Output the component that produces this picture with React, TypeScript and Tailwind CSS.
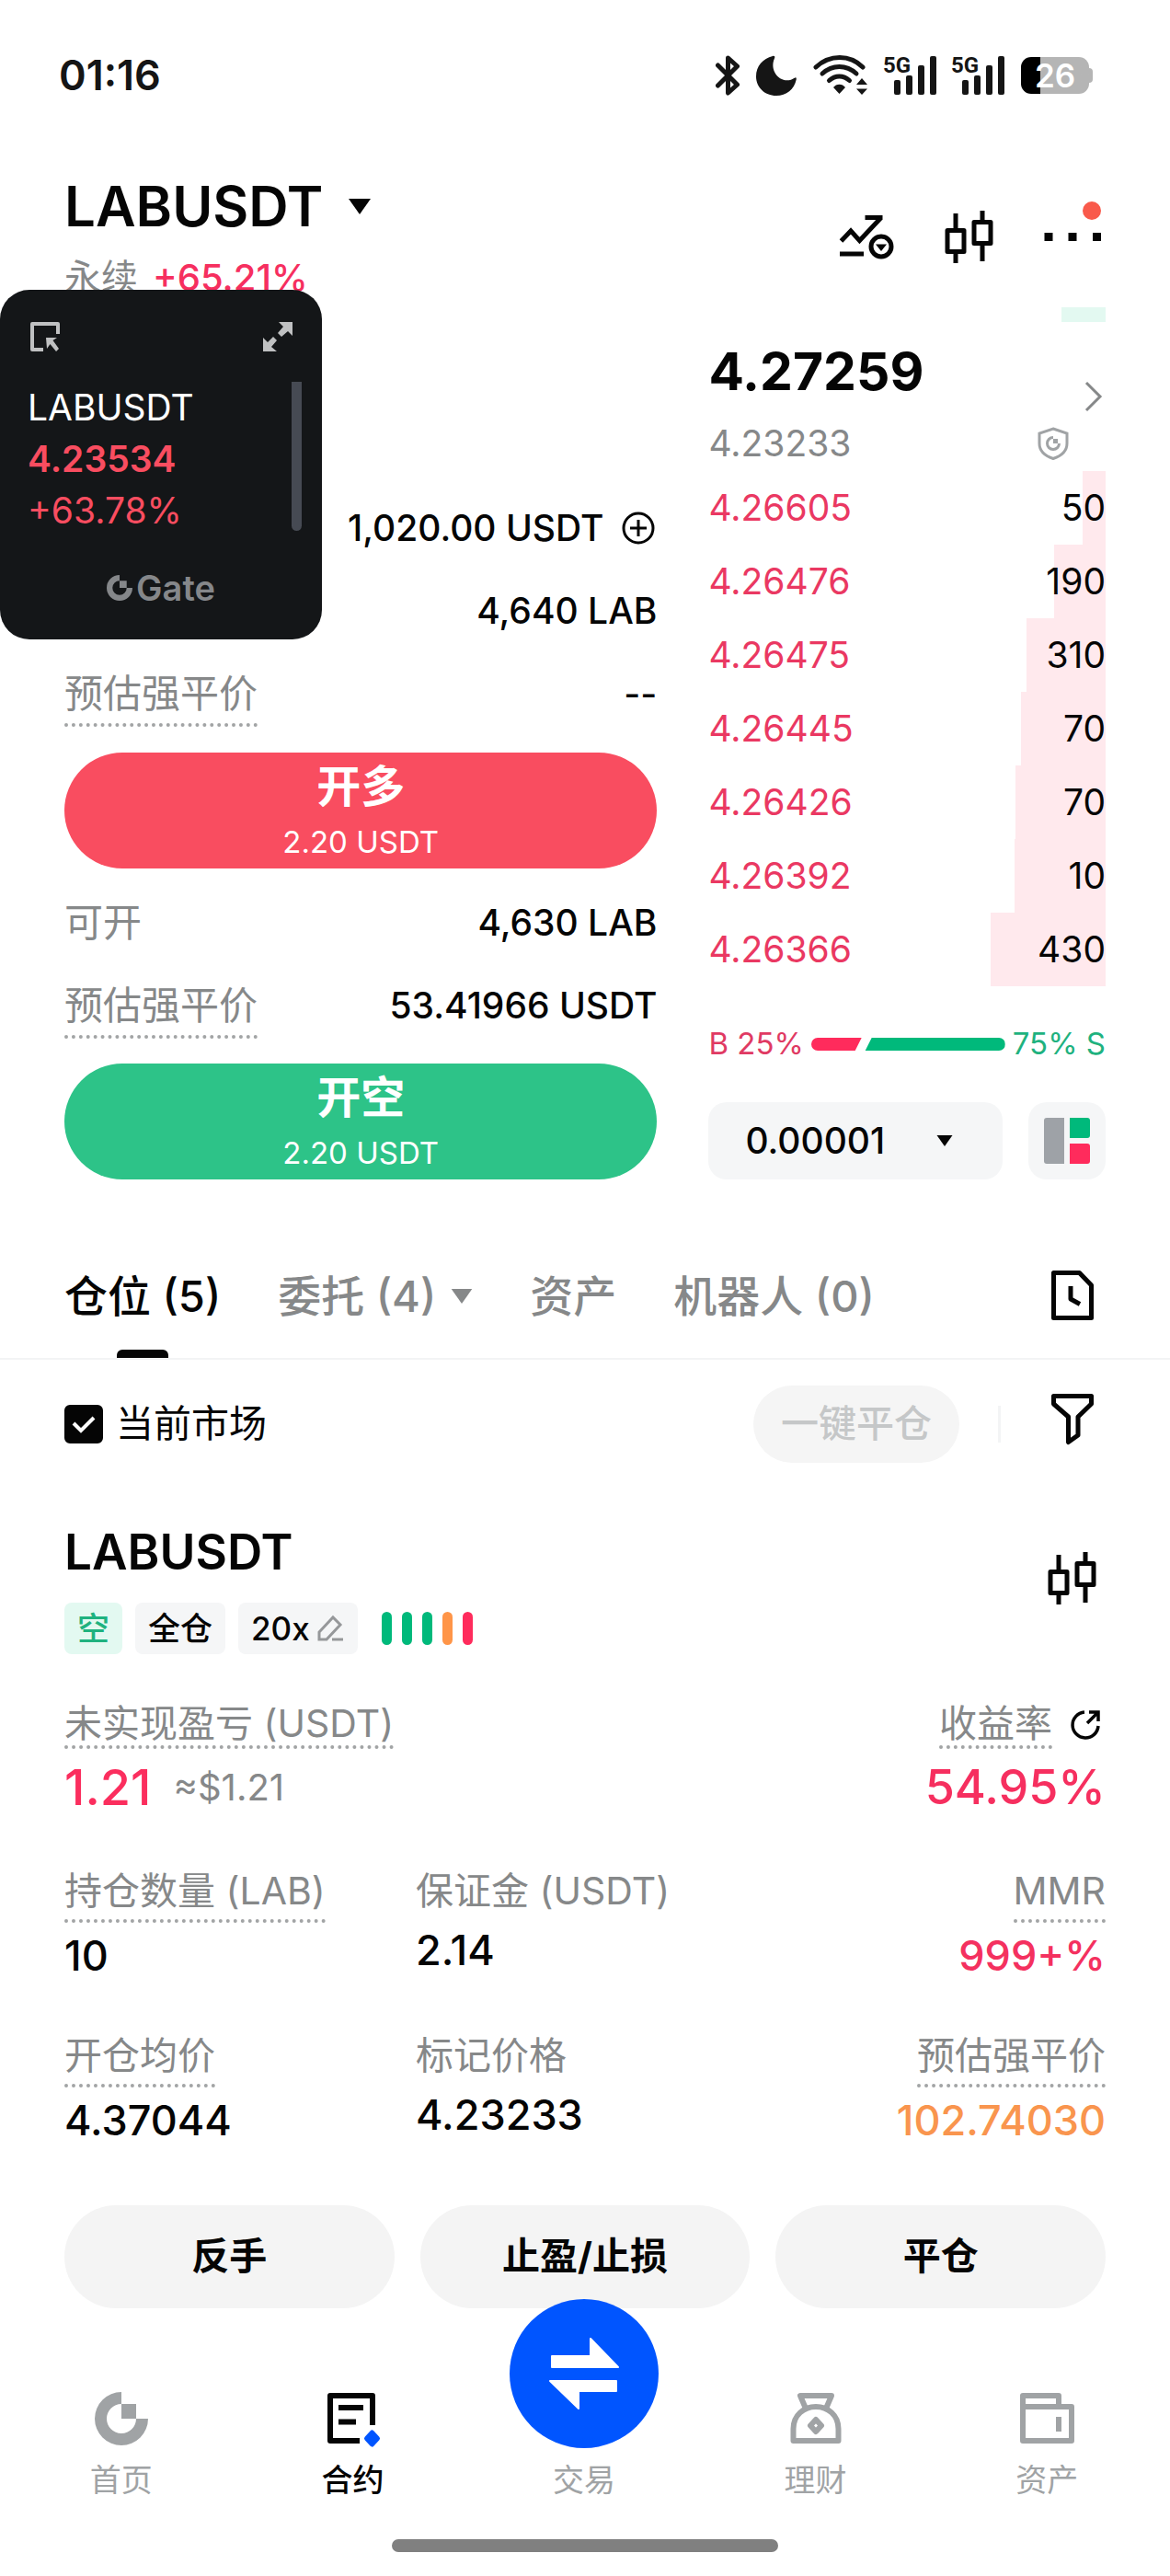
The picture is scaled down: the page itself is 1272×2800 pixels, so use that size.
import { useState } from "react";
import type { ReactNode } from "react";

type Ask = {
  price: string;
  amount: string;
  depth: number;
};

type StatProps = {
  label: string;
  value: string;
  dotted?: boolean;
  right?: boolean;
  color?: string;
};

const asks: Ask[] = [
  { price: "4.26605", amount: "50", depth: 6 },
  { price: "4.26476", amount: "190", depth: 13 },
  { price: "4.26475", amount: "310", depth: 20 },
  { price: "4.26445", amount: "70", depth: 21.5 },
  { price: "4.26426", amount: "70", depth: 22.7 },
  { price: "4.26392", amount: "10", depth: 23 },
  { price: "4.26366", amount: "430", depth: 29 },
];

const tabs = [
  { id: "positions", label: "仓位 (5)" },
  { id: "orders", label: "委托 (4)", caret: true },
  { id: "assets", label: "资产" },
  { id: "bots", label: "机器人 (0)" },
];

const riskBars = ["bg-[#00b97b]", "bg-[#00b97b]", "bg-[#00b97b]", "bg-[#ff9548]", "bg-[#ff2b5c]"];

const Caret = ({ className = "" }: { className?: string }) => (
  <svg viewBox="0 0 24 17" className={className} fill="currentColor" aria-hidden="true">
    <path d="M0 0H24L12 17Z" />
  </svg>
);

const Signal = () => (
  <svg width="56" height="44" viewBox="0 0 56 44" fill="#151515" className="overflow-visible" aria-hidden="true">
    <text x="-2" y="19" fontSize="24" fontWeight="700" fontFamily="Roboto, sans-serif">
      5G
    </text>
    <rect x="10" y="27" width="7" height="16" rx="2" />
    <rect x="23" y="22" width="7" height="21" rx="2" />
    <rect x="36" y="11" width="7" height="32" rx="2" />
    <rect x="49" y="1" width="7" height="42" rx="2" />
  </svg>
);

const StatusBar = () => (
  <div className="flex h-[164px] items-center justify-between pr-[84px] pl-[64px]">
    <span className="text-[45px] font-semibold text-[#151515]">01:16</span>
    <div className="flex items-center gap-[18px]">
      <svg width="26" height="44" viewBox="0 0 26 44" fill="none" stroke="#151515" strokeWidth="5" strokeLinejoin="round" strokeLinecap="round" aria-hidden="true">
        <path d="M2.500 11L23.500 32L13.500 41V3L23.500 12L2.500 33" />
      </svg>
      <svg width="44" height="44" viewBox="0 0 44 44" fill="#151515" aria-hidden="true">
        <path d="M18 1C20 .5 21 1.500 20 3.500C14.500 15.500 24 29.500 37 27C39 26.500 41 25 42.500 24.500C43.500 24 44 25 43.700 26.500C41.500 37 33 44 22 44C9 44 0 34.500 0 23C0 12 7.500 3.500 18 1Z" />
      </svg>
      <svg width="60" height="44" viewBox="0 0 60 44" fill="none" stroke="#151515" strokeWidth="5" strokeLinecap="round" aria-hidden="true">
        <path d="M3 13C18 -1 40 -1 54 13" />
        <path d="M10 20C21 10 36 10 47 20" />
        <path d="M17.500 27.500C24 21.500 33 21.500 39.500 27.500" />
        <path d="M22 35C25 30.500 32 30.500 35 35L28.500 42Z" fill="#151515" stroke="none" />
        <path d="M47 32L53 25L59 32ZM47 36.500H59L53 43Z" fill="#151515" stroke="none" />
      </svg>
      <Signal />
      <Signal />
      <div className="flex items-center">
        <div className="flex h-10 w-[74px] items-center justify-center rounded-[11px] bg-linear-to-r from-black from-29% to-[#b5b5b5] to-29% text-[35px] font-semibold text-white">
          26
        </div>
        <div className="h-4 w-1 rounded-r-sm bg-[#b5b5b5]" />
      </div>
    </div>
  </div>
);

const Candles = () => (
  <svg width="72" height="72" viewBox="0 0 72 72" fill="none" stroke="#050505" strokeWidth="5" strokeLinejoin="round" aria-hidden="true">
    <path d="M12 29.500H30V52.500H12ZM21 11V29M21 53V65" />
    <path d="M41 20.500H59V43.500H41ZM50 8V20M50 44V63" />
  </svg>
);

const Header = () => (
  <header className="flex items-center justify-between px-[70px] pt-5">
    <div>
      <h1>
        <button className="flex h-20 items-center gap-7 text-[60px] font-semibold">
          LABUSDT
          <Caret className="h-[17px] w-6" />
        </button>
      </h1>
      <p className="mt-[10px] flex h-14 items-center gap-4 text-[40px]">
        <span className="text-[#868889]">永续</span>
        <span className="font-medium text-[#f62f5f]">+65.21%</span>
      </p>
    </div>
    <div className="flex gap-10">
      <button aria-label="行情">
        <svg width="72" height="72" viewBox="0 0 72 72" fill="none" stroke="#050505" strokeWidth="5" aria-hidden="true">
          <path d="M8.500 41L19 30L28.500 40.500L51.500 16M34.500 15.500H53.500M7 55H33" />
          <circle cx="52" cy="47" r="11" />
          <path d="M46 44.500H58L52 52Z" fill="#050505" stroke="none" />
        </svg>
      </button>
      <button aria-label="K线">
        <Candles />
      </button>
      <button aria-label="更多">
        <svg width="72" height="72" viewBox="0 0 72 72" fill="#050505" className="overflow-visible" aria-hidden="true">
          <path d="M5.500 32H14.500V41H5.500ZM31.500 32H40.500V41H31.500ZM58 32H67V41H58Z" />
          <circle cx="57" cy="8" r="10" fill="#f95a4b" />
        </svg>
      </button>
    </div>
  </header>
);

const Row = ({ label, dotted, children }: { label?: string; dotted?: boolean; children: ReactNode }) => (
  <div className="flex h-[90px] items-center justify-between">
    <span
      className={
        dotted
          ? "mt-3 border-b-4 border-dotted border-[#a2a4a5] pb-2 text-[42px] leading-[48px] text-[#868889]"
          : "text-[42px] leading-[48px] text-[#868889]"
      }
    >
      {label}
    </span>
    <span className="flex items-center gap-[18px] text-[39px] font-medium">{children}</span>
  </div>
);

const OrderForm = () => (
  <section className="min-w-0 flex-[645] pt-[199px]">
    <Row>
      1,020.00 USDT
      <button aria-label="充值">
        <svg width="40" height="40" viewBox="0 0 40 40" fill="none" stroke="#050505" strokeWidth="3" aria-hidden="true">
          <circle cx="20" cy="20" r="16" />
          <path d="M20 11V29M11 20H29" />
        </svg>
      </button>
    </Row>
    <Row>4,640 LAB</Row>
    <Row label="预估强平价" dotted>
      --
    </Row>
    <button className="mt-[19px] flex h-[126px] w-full flex-col items-center justify-center rounded-full bg-[#f94d60] pt-1 text-white">
      <span className="text-[48px] leading-[64px] font-bold">开多</span>
      <span className="text-[33px] leading-[56px]">2.20 USDT</span>
    </button>
    <div className="mt-[14px]">
      <Row label="可开">4,630 LAB</Row>
      <Row label="预估强平价" dotted>
        53.41966 USDT
      </Row>
    </div>
    <button className="mt-[18px] flex h-[126px] w-full flex-col items-center justify-center rounded-full bg-[#2dc388] pt-1 text-white">
      <span className="text-[48px] leading-[64px] font-bold">开空</span>
      <span className="text-[33px] leading-[56px]">2.20 USDT</span>
    </button>
  </section>
);

const OrderBook = () => (
  <section className="min-w-0 flex-[432] pt-1">
    <div className="ml-auto h-4 w-12 bg-[#e3f9f1]" />
    <div className="mt-[18px] flex h-[84px] justify-between">
      <span className="text-[57px] leading-[72px] font-bold">4.27259</span>
      <button className="self-end" aria-label="详情">
        <svg width="24" height="42" viewBox="0 0 24 42" fill="none" stroke="#868889" strokeWidth="3" aria-hidden="true">
          <path d="M3 6L18 21L3 36" />
        </svg>
      </button>
    </div>
    <div className="flex h-[60px] items-center justify-between pr-10">
      <span className="text-[39px] text-[#868889]">4.23233</span>
      <svg width="34" height="36" viewBox="0 0 34 36" fill="none" stroke="#a0a3a5" strokeWidth="3" aria-hidden="true">
        <path d="M17 2L32 7V18C32 26 26 31.500 17 34.500C8 31.500 2 26 2 18V7Z" />
        <path d="M17 11.500A6.500 6.500 0 1 0 23.500 18" />
        <path d="M17 13H22V18H17Z" fill="#a0a3a5" stroke="none" />
      </svg>
    </div>
    <table className="w-full text-[39px]">
      <tbody>
        {asks.map((ask) => (
          <tr
            key={ask.price}
            className="h-20"
            style={{
              background: `linear-gradient(to left, #ffe9ed ${ask.depth}%, transparent ${ask.depth}%)`,
            }}
          >
            <td className="p-0 text-[#ea3862]">{ask.price}</td>
            <td className="p-0 text-right">{ask.amount}</td>
          </tr>
        ))}
      </tbody>
    </table>
    {/* 买卖比例 */}
    <div className="flex h-[126px] items-center gap-2 text-[33px] whitespace-nowrap">
      <span className="text-[#e03a63]">B 25%</span>
      <div className="flex h-[14px] flex-1">
        <div className="w-[26%] rounded-l-full bg-[#ff2b5c] [clip-path:polygon(0_0,100%_0,calc(100%_-_7px)_100%,0_100%)]" />
        <div className="flex-1 rounded-r-full bg-[#00b97b] [clip-path:polygon(11px_0,100%_0,100%_100%,4px_100%)]" />
      </div>
      <span className="text-[#1fb27f]">75% S</span>
    </div>
    <div className="flex h-[84px] gap-7">
      <div className="relative flex-1">
        <select
          aria-label="价格精度"
          className="h-full w-full appearance-none rounded-[20px] bg-[#f5f6f7] pl-10 text-[39px] font-medium"
        >
          <option>0.00001</option>
        </select>
        <Caret className="pointer-events-none absolute top-9 right-[54px] h-3 w-[18px]" />
      </div>
      <button className="flex w-[84px] items-center justify-center rounded-[20px] bg-[#f5f6f7]" aria-label="盘口样式">
        <svg width="50" height="50" viewBox="0 0 50 50" aria-hidden="true">
          <path d="M3 0H22V50H3Q0 50 0 47V3Q0 0 3 0Z" fill="#9ea2a7" />
          <path d="M28 0H47Q50 0 50 3V19Q50 22 47 22H28Z" fill="#00b97b" />
          <path d="M28 28H47Q50 28 50 31V47Q50 50 47 50H28Z" fill="#ff2b5c" />
        </svg>
      </button>
    </div>
  </section>
);

// 悬浮行情窗
const FloatingTicker = () => (
  <aside className="absolute top-[315px] left-0 flex h-[380px] w-[350px] flex-col rounded-[32px] bg-[#141618] px-[30px] pt-[30px]">
    <div className="flex justify-between">
      <button aria-label="收起">
        <svg width="38" height="38" viewBox="0 0 38 38" fill="none" stroke="#c0c1c2" strokeWidth="4" aria-hidden="true">
          <path d="M33 18V7H5V35H17" strokeLinejoin="round" />
          <path d="M20 22H32L27.500 25L34 34L31 37L24.500 29L21 34Z" fill="#c0c1c2" stroke="none" />
        </svg>
      </button>
      <button aria-label="展开">
        <svg width="36" height="38" viewBox="0 0 36 38" fill="#c0c1c2" aria-hidden="true">
          <path d="M19 5H34V20L29 15L22 21L18 17L24 10Z" />
          <path d="M2 22L7 27L13 21L17 25L11 32L17 37H2Z" />
        </svg>
      </button>
    </div>
    <div className="mt-8 flex justify-between text-[39px] leading-[56px] text-[#f94d60]">
      <div>
        <p className="text-white">LABUSDT</p>
        <p className="font-semibold">4.23534</p>
        <p>+63.78%</p>
      </div>
      <div className="-mr-2 h-[162px] w-[11px] rounded-b-full bg-[#464a53]" />
    </div>
    <div className="mt-8 flex items-center justify-center gap-1 text-[38px] leading-[48px] font-semibold text-[#85878a]">
      <svg width="28" height="28" viewBox="7 7 58 58" fill="currentColor" aria-hidden="true">
        <path d="M36 7A29 29 0 1 0 65 36H52A16 16 0 1 1 36 20ZM36 20H52V36H36Z" />
      </svg>
      Gate
    </div>
  </aside>
);

const Stat = ({ label, value, dotted, right, color = "text-[#050505]" }: StatProps) => (
  <div className={right ? "text-right" : ""}>
    <dt
      className={
        dotted
          ? "inline-block border-b-4 border-dotted border-[#a2a4a5] pb-[7px] align-top text-[41px] leading-[48px] text-[#868889]"
          : "inline-block pb-[5px] align-top text-[41px] leading-[48px] text-[#868889]"
      }
    >
      {label}
    </dt>
    <dd className={`mt-2 text-[45px] leading-[56px] font-medium ${color}`}>{value}</dd>
  </div>
);

const Position = () => (
  <article className="px-[70px] pt-[33px]">
    <div className="flex items-start justify-between">
      <div>
        <h2 className="text-[53px] leading-[72px] font-semibold">LABUSDT</h2>
        <div className="mt-[19px] flex h-14 items-center gap-[14px] text-[35px] font-medium">
          <span className="flex h-full items-center rounded-lg bg-[#e3f9f1] px-[14px] text-[#1fb27f]">空</span>
          <span className="flex h-full items-center rounded-lg bg-[#f5f6f7] px-[14px]">全仓</span>
          <button className="flex h-full items-center gap-2 rounded-lg bg-[#f5f6f7] px-[14px]">
            20x
            <svg width="30" height="30" viewBox="0 0 30 30" fill="none" stroke="#96989a" strokeWidth="3" aria-hidden="true">
              <path d="M2 27V19L17 3L25 11L10 27ZM16 27H28" />
            </svg>
          </button>
          <div className="flex gap-[11px] pl-3">
            {riskBars.map((bar, i) => (
              <span key={i} className={`h-9 w-[11px] rounded-full ${bar}`} />
            ))}
          </div>
        </div>
      </div>
      <button className="mt-7" aria-label="K线">
        <Candles />
      </button>
    </div>

    <div className="mt-[51px] flex justify-between">
      <div>
        <span className="inline-block border-b-4 border-dotted border-[#a2a4a5] align-top text-[41px] leading-[48px] text-[#868889]">
          未实现盈亏 (USDT)
        </span>
        <p className="mt-[10px] flex items-center gap-6 text-[54px] leading-[64px] font-medium text-[#fb2e5e]">
          1.21
          <span className="text-[40px] font-normal text-[#868889]">≈$1.21</span>
        </p>
      </div>
      <div className="text-right">
        <div className="flex justify-end gap-[18px]">
          <span className="border-b-4 border-dotted border-[#a2a4a5] text-[41px] leading-[48px] text-[#868889]">
            收益率
          </span>
          <button aria-label="分享">
            <svg width="40" height="40" viewBox="0 0 40 40" fill="none" stroke="#050505" strokeWidth="3.500" aria-hidden="true">
              <path d="M17 6A14 14 0 1 0 32 21" />
              <path d="M20 18L31 7M22 6H32V16" />
            </svg>
          </button>
        </div>
        <p className="mt-[10px] text-[52px] leading-[64px] font-medium text-[#f62f5f]">54.95%</p>
      </div>
    </div>

    <dl className="mt-14 grid grid-cols-[27fr_27fr_26fr] gap-y-14 whitespace-nowrap">
      <Stat label="持仓数量 (LAB)" value="10" dotted />
      <Stat label="保证金 (USDT)" value="2.14" />
      <Stat label="MMR" value="999+%" dotted right color="text-[#f4315f]" />
      <Stat label="开仓均价" value="4.37044" dotted />
      <Stat label="标记价格" value="4.23233" />
      <Stat label="预估强平价" value="102.74030" dotted right color="text-[#f9954e]" />
    </dl>

    <div className="mt-16 grid grid-cols-3 gap-7 text-[41px] font-bold">
      <button className="h-28 rounded-full bg-[#f4f4f4]">反手</button>
      <button className="h-28 rounded-full bg-[#f4f4f4]">止盈/止损</button>
      <button className="h-28 rounded-full bg-[#f4f4f4]">平仓</button>
    </div>
  </article>
);

const NavItem = ({ label, active, children }: { label: string; active?: boolean; children: ReactNode }) => (
  <a
    href="#"
    className={`flex flex-1 flex-col items-center justify-end gap-[7px] text-[34px] leading-[48px] ${
      active ? "font-medium text-[#050505]" : "text-[#a0a3a5]"
    }`}
  >
    {children}
    {label}
  </a>
);

const BottomNav = () => (
  <nav className="relative mt-[84px] flex pr-2 pl-[6px]">
    <NavItem label="首页">
      <svg width="72" height="72" viewBox="0 0 72 72" fill="currentColor" aria-hidden="true">
        <path d="M36 7A29 29 0 1 0 65 36H52A16 16 0 1 1 36 20ZM36 20H52V36H36Z" />
      </svg>
    </NavItem>
    <NavItem label="合约" active>
      <svg width="72" height="72" viewBox="0 0 72 72" fill="none" stroke="currentColor" strokeWidth="6" strokeLinejoin="round" aria-hidden="true">
        <path d="M58 43V11H12V60H44M21 24H48M21 39.500H40" />
        <path d="M57.500 51L63.500 57.500L57.500 64L51.500 57.500Z" fill="#0055ff" stroke="#0055ff" strokeWidth="5" />
      </svg>
    </NavItem>
    <NavItem label="交易">
      <span className="-mt-[94px] mb-1 rounded-full bg-[#0055ff]">
        <svg width="162" height="162" viewBox="0 0 162 162" fill="#fff" stroke="#fff" strokeWidth="2" strokeLinejoin="round" aria-hidden="true">
          <path d="M46 62H88V43L118 74H46Z" />
          <path d="M116 89V100H75V119L44 89Z" />
        </svg>
      </span>
    </NavItem>
    <NavItem label="理财">
      <svg width="72" height="72" viewBox="0 0 72 72" fill="none" stroke="currentColor" strokeWidth="6" strokeLinejoin="round" aria-hidden="true">
        <path d="M25 25L19 11H53L47 25" />
        <path d="M11.500 60V47C11.500 32 23 23 36 23S60.500 32 60.500 47V60Z" />
        <path d="M36 37L42 43.500L36 50L30 43.500Z" />
      </svg>
    </NavItem>
    <NavItem label="资产">
      <svg width="72" height="72" viewBox="0 0 72 72" fill="none" stroke="currentColor" strokeWidth="6" strokeLinejoin="round" aria-hidden="true">
        <path d="M10 23V11H49V23M10 23H63V60H10Z" />
        <path d="M49 34V50" />
      </svg>
    </NavItem>
  </nav>
);

const App = () => {
  const [activeTab, setActiveTab] = useState("positions");
  const [onlyCurrent, setOnlyCurrent] = useState(true);

  return (
    <div className="relative bg-white font-[Inter,'Noto_Sans_CJK_SC',sans-serif] text-[#050505]">
      <StatusBar />
      <Header />
      <main>
        <div className="flex gap-14 px-[70px]">
          <OrderForm />
          <OrderBook />
        </div>

        {/* 标签栏 */}
        <div className="mt-[60px] flex h-[136px] items-center justify-between border-b-2 border-[#f3f4f5] px-[70px]">
          <div className="flex h-full gap-[62px] text-[47px] font-medium whitespace-nowrap">
            {tabs.map((tab) => (
              <button
                key={tab.id}
                onClick={() => setActiveTab(tab.id)}
                className={`relative flex items-center gap-4 ${
                  activeTab === tab.id ? "text-[#050505]" : "text-[#868889]"
                }`}
              >
                {tab.label}
                {tab.caret && <Caret className="h-4 w-6" />}
                {activeTab === tab.id && (
                  <span className="absolute bottom-0 left-1/2 h-[9px] w-14 -translate-x-1/2 rounded-t-md bg-[#050505]" />
                )}
              </button>
            ))}
          </div>
          <button aria-label="历史记录">
            <svg width="72" height="72" viewBox="0 0 72 72" fill="none" stroke="#050505" strokeWidth="5" strokeLinejoin="round" aria-hidden="true">
              <path d="M15.500 10.500H43.500L56.500 24V59.500H15.500Z" />
              <path d="M34 25V39L44 44.500" />
            </svg>
          </button>
        </div>

        {/* 筛选 */}
        <div className="flex h-[140px] items-center justify-between px-[70px]">
          <label className="flex items-center gap-[14px] text-[41px]">
            <span className="grid">
              <input
                type="checkbox"
                checked={onlyCurrent}
                onChange={(e) => setOnlyCurrent(e.target.checked)}
                className="col-start-1 row-start-1 size-[42px] appearance-none rounded-md border-2 border-[#050505] checked:bg-[#050505]"
              />
              <svg viewBox="0 0 42 42" className="pointer-events-none col-start-1 row-start-1 size-[42px]" fill="none" stroke="#fff" strokeWidth="4" aria-hidden="true">
                <path d="M10 20L18 28L32 14" />
              </svg>
            </span>
            当前市场
          </label>
          <div className="flex items-center gap-[42px]">
            <button disabled className="h-[84px] rounded-full bg-[#f5f5f5] px-[30px] text-[41px] font-medium text-[#c5c7c8]">
              一键平仓
            </button>
            <span className="h-10 w-[3px] bg-[#f3f4f5]" />
            <button aria-label="筛选">
              <svg width="72" height="72" viewBox="0 0 72 72" fill="none" stroke="#050505" strokeWidth="5" strokeLinejoin="round" aria-hidden="true">
                <path d="M15.500 5.500H56.500V14L42 28V48L31.500 55.500V28L15.500 14Z" />
              </svg>
            </button>
          </div>
        </div>

        <Position />
      </main>
      <BottomNav />
      <div className="mx-auto mt-10 h-[14px] w-[33%] rounded-full bg-[#808080]" />
      <div className="h-6" />
      <FloatingTicker />
    </div>
  );
};

export default App;
